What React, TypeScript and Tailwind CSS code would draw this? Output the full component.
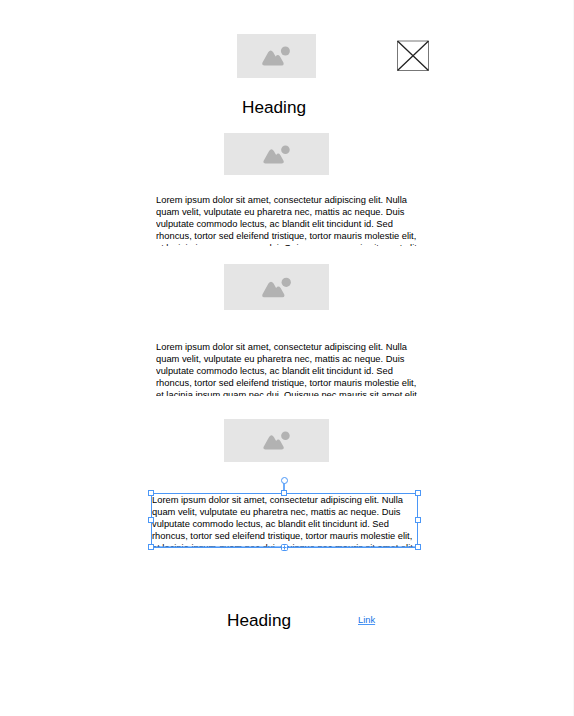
import React from "react";

const lines = [
  "Lorem ipsum dolor sit amet, consectetur adipiscing elit. Nulla",
  "quam velit, vulputate eu pharetra nec, mattis ac neque. Duis",
  "vulputate commodo lectus, ac blandit elit tincidunt id. Sed",
  "rhoncus, tortor sed eleifend tristique, tortor mauris molestie elit,",
  "et lacinia ipsum quam nec dui. Quisque nec mauris sit amet elit",
];

function Placeholder({ box, icon }: { box: string; icon: string }) {
  return (
    <div className={`flex items-center justify-center bg-[#e5e5e5] ${box}`}>
      <svg className={`mr-px ${icon}`} viewBox="0 0 28 20" fill="#b2b2b2">
        <circle cx="23.4" cy="5" r="4.5" />
        <path d="M0.5 16.6 6.2 6.2Q8.7 2.6 11.2 6.2L13.6 10.4Q15.8 7.6 18 10.4L21.4 16.6Q22.4 19.4 19.6 19.4H2.2Q-.5 19.4.5 16.6Z" />
      </svg>
    </div>
  );
}

function Paragraph({ className }: { className: string }) {
  return (
    <div className={`overflow-hidden whitespace-nowrap text-[9.33px] leading-[12px] ${className}`}>
      {lines.map((line) => (
        <p key={line}>{line}</p>
      ))}
    </div>
  );
}

function Handle({ className }: { className: string }) {
  return <span className={`absolute size-[6px] border border-[#4b97f7] bg-white ${className}`} />;
}

export default function App() {
  return (
    <main className="flex h-[716px] w-[574px] flex-col overflow-hidden border-r border-[#f7f7f7] bg-white font-['Liberation_Sans',Arial,sans-serif] text-black">
      <header className="flex pt-[34px] pl-[237px]">
        <Placeholder box="h-[44px] w-[79px]" icon="h-[20px] w-[28px]" />
        <svg className="mt-[6px] ml-[81px] h-[31px] w-[32px]" viewBox="0 0 32 31" fill="none">
          <path d="M.5 1H31.5V30.5H.5Z" stroke="#777" />
          <path d="M.5 1 31.5 30.5M31.5 1 .5 30.5" stroke="#222" strokeWidth="1.3" />
        </svg>
      </header>
      <h1 className="mt-[19px] ml-[242px] h-[20px] text-[17.2px] leading-[20px]">Heading</h1>
      <section className="mt-[16px] ml-[224px]">
        <Placeholder box="h-[42px] w-[105px]" icon="h-[19px] w-[27px]" />
      </section>
      <Paragraph className="mt-[19px] ml-[156px] h-[52px] w-[262px]" />
      <section className="mt-[18px] ml-[224px]">
        <Placeholder box="h-[46px] w-[105px]" icon="h-[21px] w-[29px]" />
      </section>
      <Paragraph className="mt-[31px] ml-[156px] h-[55px] w-[262px]" />
      <section className="mt-[23px] ml-[224px]">
        <Placeholder box="h-[43px] w-[105px]" icon="h-[19px] w-[27px]" />
      </section>
      <div className="relative mt-[31px] ml-[151px] h-[55px] w-[267px]">
        <Paragraph className="h-[55px] w-[266px] pl-px pt-px" />
        <span className="absolute inset-0 border border-[#4b97f7]" />
        <span className="absolute top-[53px] left-0 h-[2px] w-[267px] bg-[#4b97f7]/60" />
        <span className="absolute top-[-10px] left-[132px] h-[9px] w-[2px] bg-[#4b97f7]/80" />
        <span className="absolute top-[-16px] left-[130px] size-[7px] rounded-full border border-[#4b97f7] bg-white" />
        <Handle className="top-[-3px] left-[-3px]" />
        <Handle className="top-[-3px] left-[130px]" />
        <Handle className="top-[-3px] left-[264px]" />
        <Handle className="top-[24px] left-[-3px]" />
        <Handle className="top-[24px] left-[264px]" />
        <Handle className="top-[51px] left-[-3px]" />
        <Handle className="top-[51px] left-[264px]" />
        <svg className="absolute top-[51px] left-[130px] size-[7px]" viewBox="0 0 7 7" fill="white" stroke="#4b97f7">
          <rect x=".5" y=".5" width="6" height="6" rx="1" />
          <path d="M3.5 1.5v4M1.5 3.5h4" />
        </svg>
      </div>
      <footer className="mt-[62px] ml-[227px] flex items-center">
        <h2 className="w-[131px] text-[17.2px] leading-[20px]">Heading</h2>
        <a className="-mt-px text-[9.33px] leading-[12px] text-[#1673e5] underline decoration-[#4b97f7]">Link</a>
      </footer>
    </main>
  );
}
